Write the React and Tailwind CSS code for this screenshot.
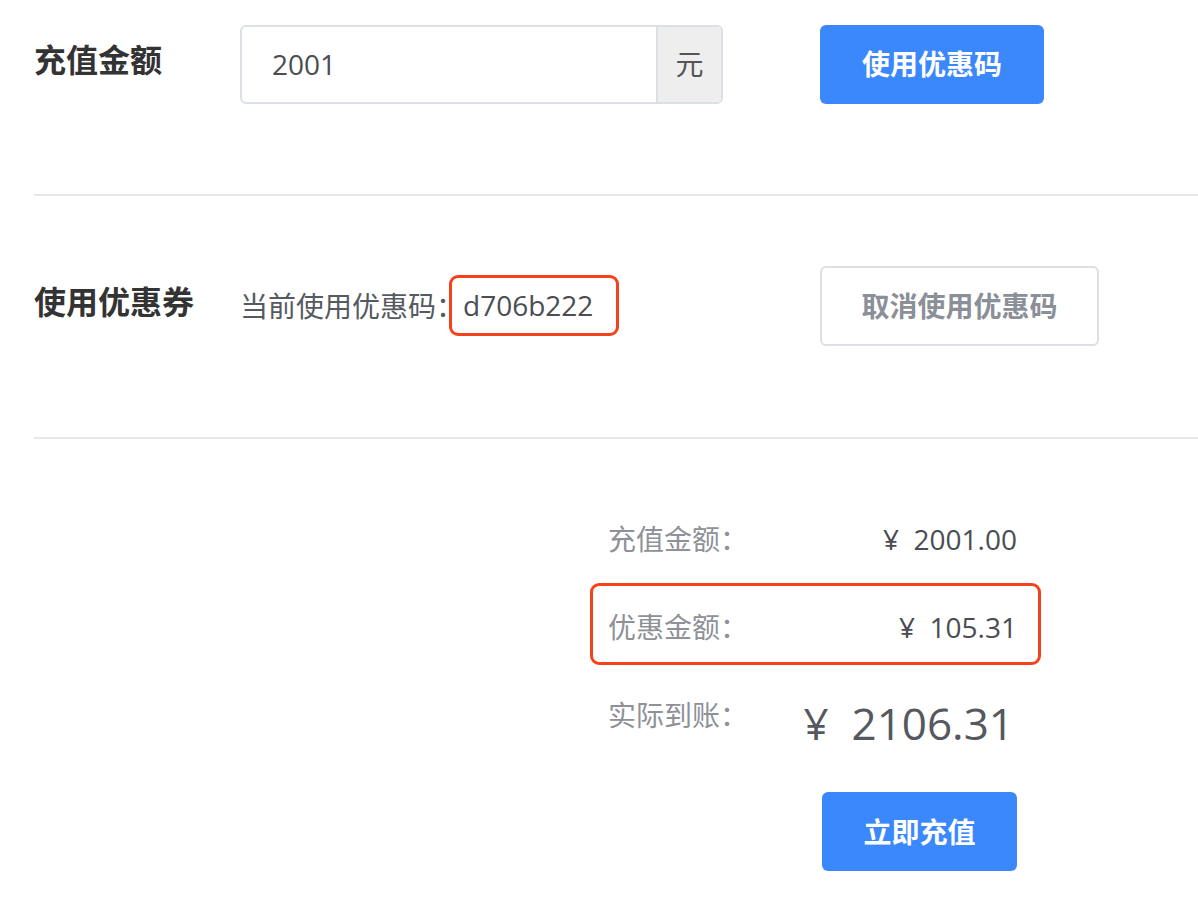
export default function App() {
  const font = { fontFamily: '"Open Sans", "Noto Sans CJK SC", sans-serif' };
  return (
    <div className="w-[1198px] h-[898px] bg-white overflow-hidden" style={font}>
      <div className="pl-[34px]">
        {/* Row 1 */}
        <div className="pt-[24px] grid grid-cols-[206px_580px_auto] items-center h-[104px]">
          <div className="text-[32px] leading-[40px] font-bold text-[#333333] -mt-[8px]">充值金额</div>
          <div className="flex w-[483px] h-[79px] border-2 border-[#dcdfe6] rounded-[6px] overflow-hidden">
            <div className="flex-1 flex items-center pl-[30px] text-[28px] text-[#4a4d52]">2001</div>
            <div className="w-[65px] flex items-center justify-center bg-[#eeeeee] border-l-2 border-[#dcdfe6] text-[28px] text-[#555]">元</div>
          </div>
          <button className="w-[224px] h-[79px] rounded-[6px] bg-[#3b88fd] text-white text-[28px] font-bold">使用优惠码</button>
        </div>

        <div className="mt-[90px] border-t-2 border-[#e6e8eb]" />

        {/* Row 2 */}
        <div className="mt-[70px] grid grid-cols-[206px_580px_auto] items-center h-[80px]">
          <div className="text-[32px] leading-[40px] font-bold text-[#333333] -mt-[8px]">使用优惠券</div>
          <div className="flex items-center text-[28px] text-[#555a60]">
            <span className="mr-[-15px]">当前使用优惠码：</span>
            <span className="inline-flex items-center h-[61px] pl-[11px] pr-[23px] border-[3px] border-[#f5421d] rounded-[9px] text-[#4a4d52] -mt-[2px]">d706b222</span>
          </div>
          <button className="w-[279px] h-[80px] rounded-[6px] border-2 border-[#dcdfe6] bg-white text-[#8b8f98] text-[28px] font-bold">取消使用优惠码</button>
        </div>

        <div className="mt-[91px] border-t-2 border-[#e6e8eb]" />

        {/* Summary */}
        <div className="ml-[574px] w-[409px] pt-[82px]">
          <div className="flex justify-between items-center h-[36px] text-[28px] leading-[36px]">
            <span className="text-[#8e9197]">充值金额：</span>
            <span className="text-[#4a4d52]">¥&nbsp;&nbsp;2001.00</span>
          </div>
          <div className="relative mt-[52px] flex justify-between items-center h-[36px] text-[28px] leading-[36px]">
            <span className="text-[#8e9197]">优惠金额：</span>
            <span className="text-[#4a4d52]">¥&nbsp;&nbsp;105.31</span>
            <div className="absolute left-[-18px] right-[-24px] top-[-26px] bottom-[-20px] border-[3px] border-[#f5421d] rounded-[9px]" />
          </div>
          <div className="mt-[52px] flex justify-between items-start">
            <span className="text-[28px] leading-[36px] text-[#8e9197]">实际到账：</span>
            <span className="text-[44px] leading-[52px] text-[#55585e] mr-[3px]">¥&nbsp;&nbsp;2106.31</span>
          </div>
          <div className="flex justify-end mt-[43px]">
            <button className="w-[195px] h-[79px] rounded-[6px] bg-[#3b88fd] text-white text-[28px] font-bold">立即充值</button>
          </div>
        </div>
      </div>
    </div>
  );
}
